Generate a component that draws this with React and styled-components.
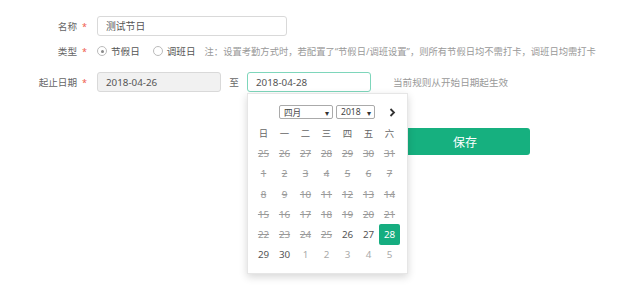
import styled, { createGlobalStyle } from 'styled-components'

const GlobalStyle = createGlobalStyle`
    html, body {
        margin: 0;
        padding: 0;
        background: #fff;
    }
    body {
        font-family: "Noto Sans", "Noto Sans CJK SC", sans-serif;
        font-size: 9.6px;
        color: #555;
    }
`

const Page = styled.div`
    width: 640px;
    height: 292px;
    padding-top: 16px;
    box-sizing: border-box;
    overflow: hidden;
`

const Row = styled.div`
    display: flex;
    align-items: center;
    height: ${p => p.h || 20}px;
    margin-bottom: ${p => p.mb || 0}px;
`

const Label = styled.div`
    width: 77px;
    text-align: right;
    color: #666;
    flex-shrink: 0;
`

const Star = styled.span`
    width: 20px;
    padding-left: 5px;
    box-sizing: border-box;
    color: #ef5a4e;
    font-size: 9px;
    flex-shrink: 0;
`

const Input = styled.div`
    width: ${p => p.w}px;
    height: 20px;
    box-sizing: border-box;
    border: 1px solid ${p => (p.active ? '#7ed6bb' : '#d9d9d9')};
    background: ${p => (p.disabled ? '#f1f1f1' : '#fff')};
    border-radius: 3px;
    padding-left: 8px;
    display: flex;
    align-items: center;
    color: #555;
    font-size: 9.8px;
`

const Radio = styled.span`
    width: 10px;
    height: 10px;
    border: 1px solid #bbb;
    border-radius: 50%;
    box-sizing: border-box;
    display: inline-flex;
    align-items: center;
    justify-content: center;
    margin-right: 4px;
    &::after {
        content: '';
        width: 3px;
        height: 3px;
        border-radius: 50%;
        background: ${p => (p.checked ? '#888' : 'transparent')};
    }
`

const RadioItem = styled.label`
    display: inline-flex;
    align-items: center;
    color: #555;
    margin-right: ${p => p.mr}px;
`

const Note = styled.span`
    color: #999;
    white-space: nowrap;
    font-size: 9.3px;
`

const To = styled.span`
    width: 26px;
    text-align: center;
    color: #666;
`

const Hint = styled.span`
    color: #999;
    margin-left: 22px;
`

const PickerWrap = styled.div`
    position: relative;
`

const Calendar = styled.div`
    position: absolute;
    top: 21px;
    left: 0;
    width: 161px;
    height: 181px;
    box-sizing: border-box;
    background: #fff;
    border: 1px solid #e6e6e6;
    box-shadow: 0 3px 8px rgba(0, 0, 0, 0.16);
    padding: 11px 8px 0 5px;
    z-index: 2;
`

const CalHeader = styled.div`
    display: flex;
    align-items: center;
    height: 14px;
    padding-left: 26px;
    margin-bottom: 4px;
`

const Select = styled.div`
    width: ${p => p.w}px;
    height: 14px;
    box-sizing: border-box;
    border: 1px solid #aaa;
    border-radius: 2px;
    margin-right: 3px;
    display: flex;
    align-items: center;
    justify-content: space-between;
    padding: 0 3px 0 4px;
    font-size: 8.6px;
    color: #444;
    &::after {
        content: '▾';
        font-size: 8px;
        color: #333;
    }
`

const NextArrow = styled.svg`
    margin-left: 11px;
`

const Grid = styled.div`
    display: grid;
    grid-template-columns: repeat(7, 21px);
    grid-auto-rows: 20.3px;
`

const Cell = styled.div`
    display: flex;
    align-items: center;
    justify-content: center;
    font-size: ${p => (p.head ? '9.4px' : '9.8px')};
    color: ${p => {
        if (p.selected) return '#fff'
        if (p.head) return '#666'
        if (p.muted) return '#aaa'
        if (p.off) return '#999'
        return '#555'
    }};
    text-decoration: ${p => (p.off ? 'line-through' : 'none')};
    background: ${p => (p.selected ? '#16ad80' : 'transparent')};
    border-radius: 2px;
`

const SaveButton = styled.button`
    margin-left: 400px;
    width: 130px;
    height: 27px;
    border: none;
    border-radius: 3px;
    background: #16b07f;
    color: #fff;
    font-family: "Noto Sans CJK SC", sans-serif;
    font-size: 12px;
    display: block;
    margin-top: 36px;
`

const weekdays = ['日', '一', '二', '三', '四', '五', '六']

const days = [
    ...[25, 26, 27, 28, 29, 30, 31].map(d => ({ d, off: true })),
    ...Array.from({ length: 25 }, (_, i) => ({ d: i + 1, off: true })),
    { d: 26 },
    { d: 27 },
    { d: 28, selected: true },
    { d: 29 },
    { d: 30 },
    ...[1, 2, 3, 4, 5].map(d => ({ d, muted: true })),
]

export default function App() {
    return (
        <Page>
            <GlobalStyle />
            <Row mb={5}>
                <Label>名称</Label>
                <Star>*</Star>
                <Input w={190}>测试节日</Input>
            </Row>
            <Row mb={11}>
                <Label>类型</Label>
                <Star>*</Star>
                <RadioItem mr={13}><Radio checked />节假日</RadioItem>
                <RadioItem mr={9}><Radio />调班日</RadioItem>
                <Note>注：设置考勤方式时，若配置了“节假日/调班设置”，则所有节假日均不需打卡，调班日均需打卡</Note>
            </Row>
            <Row>
                <Label>起止日期</Label>
                <Star>*</Star>
                <Input w={124} disabled>2018-04-26</Input>
                <To>至</To>
                <PickerWrap>
                    <Input w={124} active>2018-04-28</Input>
                    <Calendar>
                        <CalHeader>
                            <Select w={54}>四月</Select>
                            <Select w={39}>2018</Select>
                            <NextArrow width="7" height="9" viewBox="0 0 7 9">
                                <path d="M1.5 1 L5 4.5 L1.5 8" fill="none" stroke="#333" strokeWidth="1.8" />
                            </NextArrow>
                        </CalHeader>
                        <Grid>
                            {weekdays.map(w => (
                                <Cell key={w} head>{w}</Cell>
                            ))}
                            {days.map((x, i) => (
                                <Cell key={i} off={x.off} muted={x.muted} selected={x.selected}>
                                    {x.d}
                                </Cell>
                            ))}
                        </Grid>
                    </Calendar>
                </PickerWrap>
                <Hint>当前规则从开始日期起生效</Hint>
            </Row>
            <SaveButton>保存</SaveButton>
        </Page>
    )
}
